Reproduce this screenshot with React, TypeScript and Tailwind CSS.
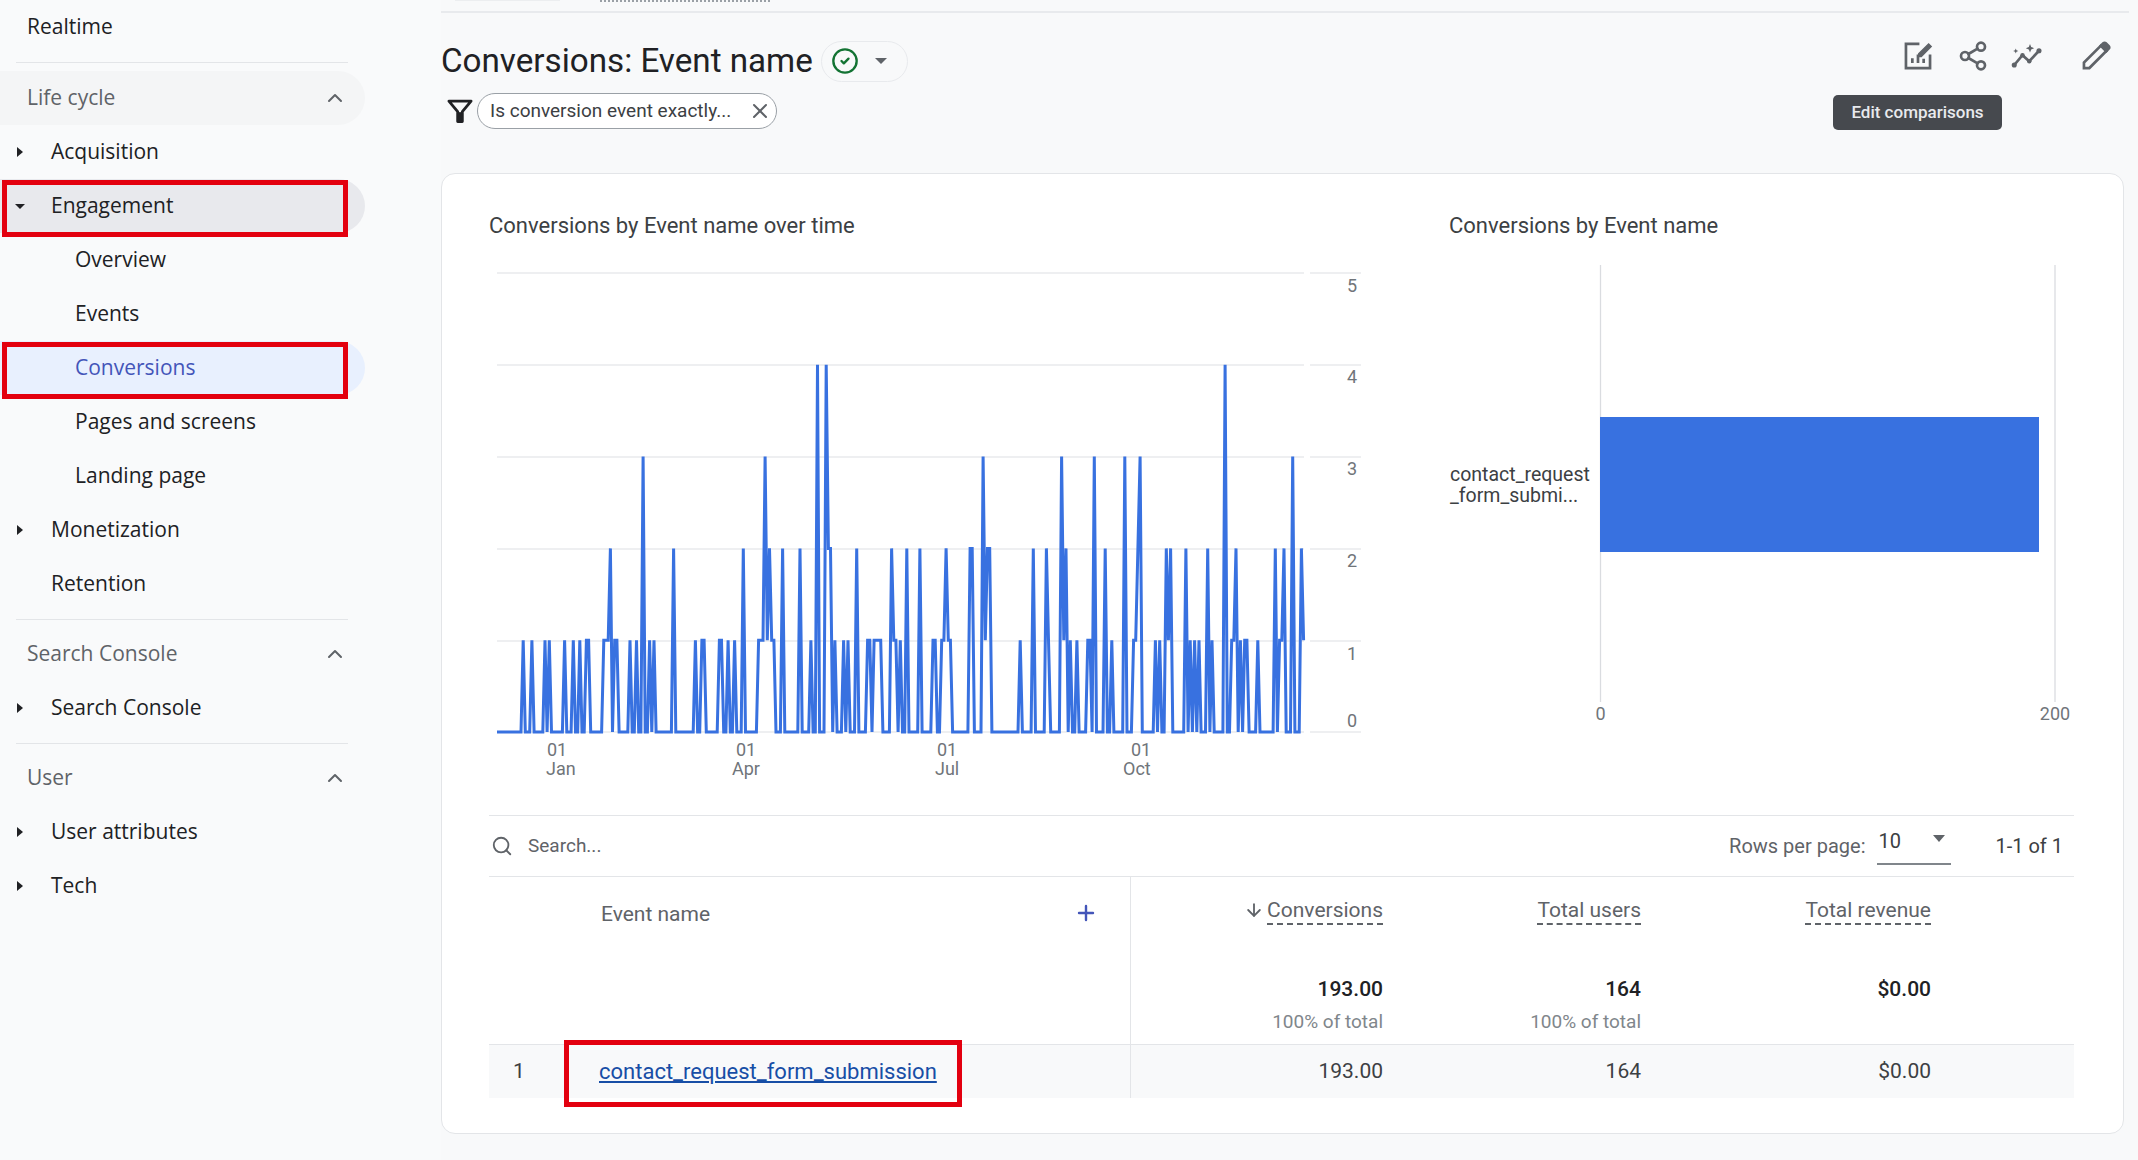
import { ArrowDown, ChevronUp, CircleCheck, Plus, Search, Share2, X } from 'lucide-react';

// peaks read off the line chart: [x position, conversions]
const PEAKS: [number, number][] = [
  [522.3, 1], [531.7, 1], [545, 1], [549.3, 1], [562.7, 1], [571.7, 1], [578, 1], [585, 1], [587.2, 1],
  [602.7, 1], [605, 1], [607, 1], [609.3, 2], [613.3, 1], [615.7, 1], [628.7, 1], [635.7, 1], [642.3, 3],
  [648.3, 1], [653.3, 1], [673, 2], [695, 1], [701.7, 1], [704, 1], [717.3, 1], [719.5, 1], [726.3, 1],
  [733, 1], [741.7, 2], [757.3, 1], [759.5, 1], [761.7, 1], [764, 3], [766.2, 1], [768.3, 2], [770.5, 1], [772.7, 1],
  [781.7, 2], [799.3, 2], [810.3, 1], [817, 4], [825.7, 4], [828, 2], [830, 2], [834.3, 1], [843.7, 1], [846, 1],
  [856.7, 2], [866, 1], [868.3, 1], [872.7, 1], [875, 1], [877.3, 1], [879.5, 1], [890, 2], [892.2, 1], [894.3, 1],
  [899, 1], [905.3, 2], [918.7, 2], [931.7, 1], [934, 1], [940.7, 1], [942.9, 1], [945.3, 2], [947.7, 1], [950, 1],
  [969.3, 2], [971.7, 2], [982.7, 3], [985, 1], [987, 2], [989.3, 2], [1020, 1], [1031.3, 2], [1044.7, 2],
  [1048.3, 1], [1060, 3], [1062.3, 1], [1064.7, 2], [1069, 1], [1075.7, 1], [1086.7, 1], [1090, 1], [1093.3, 3],
  [1104.3, 2], [1111, 1], [1124, 3], [1131.7, 1], [1134, 1], [1136, 2], [1140, 3], [1155, 1], [1159.3, 1],
  [1166, 2], [1168.3, 1], [1170.7, 2], [1184, 2], [1188.3, 1], [1192.7, 1], [1197.3, 1], [1206, 2], [1210.7, 1],
  [1224, 4], [1230, 1], [1232.7, 1], [1235, 2], [1239.3, 1], [1244, 1], [1246, 1], [1256.7, 1], [1274.7, 2],
  [1278.3, 1], [1281.7, 1], [1283.3, 2], [1292.3, 3], [1301.3, 2], [1303.3, 1],
];

const START_X = 496;
const STEP = 2.18;
const DAYS = 371;
const BASE_Y = 731;
const UNIT = 91.8;

function linePoints() {
  const values = new Array(DAYS).fill(0);
  PEAKS.forEach(([x, v]) => {
    values[Math.round((x - START_X) / STEP)] = v;
  });
  return values.map((v, i) => `${(START_X + i * STEP).toFixed(1)},${BASE_Y - v * UNIT}`).join(' ');
}

const Caret = ({ open }: { open?: boolean }) => (
  <svg width="12" height="12" viewBox="0 0 12 12" className="absolute left-[14px] top-[21px] text-[#202124]">
    {open ? <path d="M1 4h10L6 9z" fill="currentColor" /> : <path d="M3 1l6 5-6 5z" fill="currentColor" />}
  </svg>
);

function NavItem({ label, caret, open }: { label: string; caret?: boolean; open?: boolean }) {
  return (
    <div className="relative flex h-[54px] w-[365px] items-center pl-[51px] text-[#202124]">
      {caret && <Caret open={open} />}
      {label}
    </div>
  );
}

function SectionHead({ label, hover }: { label: string; hover?: boolean }) {
  return (
    <div className={`flex h-[54px] w-[365px] items-center justify-between rounded-r-full pl-[27px] pr-[18px] text-[#5f6368] ${hover ? 'bg-[#f4f5f6]' : ''}`}>
      {label}
      <ChevronUp size={24} strokeWidth={2} className="text-[#5f6368]" />
    </div>
  );
}

const RedBox = () => <div className="absolute left-[2px] top-[1px] h-[57px] w-[346px] border-[5px] border-[#e3000f]" />;

function Sidebar() {
  return (
    <aside className="w-[441px] shrink-0 bg-[#f9fafb] font-['Open_Sans',sans-serif] text-[21px]">
      <div className="flex h-[54px] items-center pl-[27px] text-[#202124]">Realtime</div>
      <div className="ml-[16px] mt-[8px] h-px w-[332px] bg-[#e3e5e8]" />
      <div className="mt-[8px]">
        <SectionHead label="Life cycle" hover />
        <NavItem label="Acquisition" caret />
        <div className="relative w-[365px] rounded-r-full bg-[#e8e9ed]">
          <NavItem label="Engagement" caret open />
          <RedBox />
        </div>
        <div className="flex h-[54px] items-center pl-[75px] text-[#202124]">Overview</div>
        <div className="flex h-[54px] items-center pl-[75px] text-[#202124]">Events</div>
        <div className="relative flex h-[54px] w-[365px] items-center rounded-r-full bg-[#e8f0fe] pl-[75px] text-[#4355b9]">
          Conversions
          <RedBox />
        </div>
        <div className="flex h-[54px] items-center pl-[75px] text-[#202124]">Pages and screens</div>
        <div className="flex h-[54px] items-center pl-[75px] text-[#202124]">Landing page</div>
        <NavItem label="Monetization" caret />
        <NavItem label="Retention" />
      </div>
      <div className="ml-[16px] mt-[8px] h-px w-[332px] bg-[#e3e5e8]" />
      <div className="mt-[7px]">
        <SectionHead label="Search Console" />
        <NavItem label="Search Console" caret />
      </div>
      <div className="ml-[16px] mt-[8px] h-px w-[332px] bg-[#e3e5e8]" />
      <div className="mt-[7px]">
        <SectionHead label="User" />
        <NavItem label="User attributes" caret />
        <NavItem label="Tech" caret />
      </div>
    </aside>
  );
}

function HeaderIcons() {
  return (
    <div className="flex items-center text-[#5f6368]">
      <svg width="34" height="34" viewBox="0 0 24 24" fill="none" stroke="currentColor" strokeWidth="1.9">
        <path d="M13 3.5H3.5v17h17V11" />
        <path d="M8 17v-3.5M12 17v-6M16 17v-3" />
        <path d="M12.5 10.5l7-7 1.8 1.8-7 7h-1.8z" fill="currentColor" strokeWidth="1" />
      </svg>
      <Share2 size={32} strokeWidth={2} className="ml-[22px]" />
      <svg width="36" height="36" viewBox="0 0 24 24" className="ml-[20px]" fill="currentColor">
        <path d="M3.5 18l5.5-6.5 4.5 4 6.5-7" fill="none" stroke="currentColor" strokeWidth="1.8" />
        <circle cx="3.5" cy="18" r="1.7" />
        <circle cx="9" cy="11.5" r="1.5" />
        <circle cx="13.5" cy="15.5" r="1.5" />
        <circle cx="20" cy="8.5" r="1.7" />
        <path d="M14 4l.8 2 2 .8-2 .8-.8 2-.8-2-2-.8 2-.8zM4.5 7l.5 1.2 1.2.5-1.2.5-.5 1.2-.5-1.2-1.2-.5 1.2-.5z" />
      </svg>
      <svg width="34" height="34" viewBox="0 0 24 24" className="ml-[34px] mr-[11px]" fill="none" stroke="currentColor" strokeWidth="1.9">
        <path d="M3.5 20.5v-3.8L15.5 4.7l3.8 3.8L7.3 20.5z" />
        <path d="M15.5 4.7l1.7-1.7a1.2 1.2 0 011.7 0l2.1 2.1a1.2 1.2 0 010 1.7l-1.7 1.7z" fill="currentColor" />
      </svg>
    </div>
  );
}

function LineChart() {
  const grid = [272, 364, 456, 548, 640, 731];
  const yLabels: [string, number][] = [['5', 285], ['4', 376], ['3', 468], ['2', 560], ['1', 653], ['0', 720]];
  const xLabels: [string, string, number, number][] = [
    ['01', 'Jan', 546, 545],
    ['01', 'Apr', 735, 731],
    ['01', 'Jul', 936, 934],
    ['01', 'Oct', 1130, 1122],
  ];
  return (
    <svg width="912" height="564" viewBox="488 250 912 564" className="block">
      {grid.map((y) => (
        <g key={y} stroke="#e8eaed" strokeWidth="1.3">
          <line x1="496" x2="1303" y1={y} y2={y} />
          <line x1="1309" x2="1360" y1={y} y2={y} />
        </g>
      ))}
      <polyline points={linePoints()} fill="none" stroke="#3871e0" strokeWidth="3" strokeLinejoin="miter" />
      {yLabels.map(([t, y]) => (
        <text key={t} x="1351" y={y + 6} textAnchor="middle" fontSize="18" fill="#70757a">{t}</text>
      ))}
      {xLabels.map(([d, m, dx, mx]) => (
        <g key={m} fontSize="18" fill="#70757a">
          <text x={dx} y="755">{d}</text>
          <text x={mx} y="774">{m}</text>
        </g>
      ))}
    </svg>
  );
}

function BarChart() {
  return (
    <svg width="625" height="564" viewBox="1448 250 625 564" className="block">
      <line x1="1599.5" x2="1599.5" y1="264" y2="701" stroke="#dadce0" strokeWidth="1.3" />
      <line x1="2054" x2="2054" y1="264" y2="701" stroke="#dadce0" strokeWidth="1.3" />
      <rect x="1599" y="416" width="439" height="135" fill="#3871e0" />
      <g fontSize="19.5" fill="#3c4043">
        <text x="1449" y="480">contact_request</text>
        <text x="1449" y="501">_form_submi...</text>
      </g>
      <g fontSize="18" fill="#70757a" textAnchor="middle">
        <text x="1599.5" y="719">0</text>
        <text x="2054" y="719">200</text>
      </g>
    </svg>
  );
}

function MetricHead({ label, arrow }: { label: string; arrow?: boolean }) {
  return (
    <div className="flex items-start justify-end gap-[3px] text-[#5f6368]">
      {arrow && <ArrowDown size={20} strokeWidth={2.2} className="mt-[3px] text-[#5f6368]" />}
      <span className="border-b-2 border-dashed border-[#5f6368] leading-[26px]">{label}</span>
    </div>
  );
}

function MetricColumn({ label, total, pct, arrow }: { label: string; total: string; pct?: string; arrow?: boolean }) {
  return (
    <div className="pt-[20px] text-right">
      <MetricHead label={label} arrow={arrow} />
      <div className="mt-[51px] font-medium leading-[26px] text-[#202124]">{total}</div>
      {pct && <div className="mt-[8px] text-[19px] leading-[24px] text-[#80868b]">{pct}</div>}
    </div>
  );
}

function DataTable() {
  return (
    <div className="text-[21px]">
      <div className="flex h-[62px] items-center justify-between border-y border-[#e3e5e8] text-[20px] text-[#5f6368]">
        <div className="flex items-center pl-[2px] text-[19px]">
          <Search size={22} strokeWidth={2} />
          <span className="ml-[15px]">Search...</span>
        </div>
        <div className="flex items-center pr-[11px]">
          <span>Rows per page:</span>
          <div className="relative ml-[12px] h-[38px] w-[74px] border-b-2 border-[#80868b]">
            <span className="absolute left-[1px] top-[-1px] text-[#3c4043]">10</span>
            <svg width="14" height="14" viewBox="0 0 14 14" className="absolute right-[5px] top-[5px]">
              <path d="M1 3h12L7 10z" fill="#5f6368" />
            </svg>
          </div>
          <span className="ml-[44px] text-[#3c4043]">1-1 of 1</span>
        </div>
      </div>
      <div className="grid grid-cols-[642px_252px_258px_290px_1fr]">
        <div className="flex h-[167px] items-start justify-between border-r border-[#e3e5e8] pl-[112px] pr-[32px] pt-[23px] text-[#5f6368]">
          <span className="leading-[28px]">Event name</span>
          <Plus size={24} strokeWidth={2.4} className="mt-[1px] text-[#4355b9]" />
        </div>
        <MetricColumn label="Conversions" total="193.00" pct="100% of total" arrow />
        <MetricColumn label="Total users" total="164" pct="100% of total" />
        <MetricColumn label="Total revenue" total="$0.00" />
        <div />
      </div>
      <div className="grid h-[54px] grid-cols-[642px_252px_258px_290px_1fr] items-center border-t border-[#e3e5e8] bg-[#f8f9fa] text-[#3c4043]">
        <div className="relative flex h-full items-center border-r border-[#e3e5e8]">
          <span className="w-[110px] pl-[24px]">1</span>
          <a className="text-[22px] text-[#174ea6] underline">contact_request_form_submission</a>
          <div className="absolute left-[75px] top-[-5px] h-[67px] w-[398px] border-[5px] border-[#e3000f]" />
        </div>
        <div className="text-right">193.00</div>
        <div className="text-right">164</div>
        <div className="text-right">$0.00</div>
        <div />
      </div>
    </div>
  );
}

export default function App() {
  return (
    <div className="flex h-[1160px] w-[2138px] overflow-hidden bg-[#f8f9fa] font-[Roboto,sans-serif]">
      <Sidebar />
      <main className="flex-1 pr-[15px]">
        <div className="-mr-[5px] flex h-[13px] items-start gap-[40px] border-b-2 border-[#e8eaed] pl-[14px]">
          <div className="h-px w-[105px] bg-[#eceef0]" />
          <div className="h-0 w-[170px] border-t-2 border-dotted border-[#9aa0a6]" />
        </div>
        <div className="relative flex items-start justify-between">
          <div>
            <div className="mt-[24px] flex h-[48px] items-center">
              <h1 className="text-[33.2px] font-normal text-[#202124]">Conversions: Event name</h1>
              <div className="ml-[8px] flex h-[41px] w-[87px] items-center rounded-full border border-[#e8eaed] pl-[9px]">
                <CircleCheck size={28} strokeWidth={2} className="text-[#137333]" />
                <svg width="14" height="14" viewBox="0 0 14 14" className="ml-[15px]">
                  <path d="M1 4h12L7 10z" fill="#5f6368" />
                </svg>
              </div>
            </div>
            <div className="mt-[8px] flex items-center pl-[5px]">
              <svg width="28" height="28" viewBox="0 0 24 24" fill="none" stroke="#202124">
                <path d="M2.5 3.5h19L14 12.5v8.5h-4v-8.5z" strokeWidth="2.4" strokeLinejoin="round" />
                <path d="M10.5 13h3v8h-3z" fill="#202124" strokeWidth="0" />
              </svg>
              <div className="ml-[3px] flex h-[36px] w-[300px] items-center justify-between rounded-full border border-[#9aa0a6] bg-white pl-[12px] pr-[4px] text-[19px] text-[#3c4043]">
                <span>Is conversion event exactly...</span>
                <X size={24} strokeWidth={2} className="text-[#5f6368]" />
              </div>
            </div>
          </div>
          <div className="mt-[25px]">
            <HeaderIcons />
          </div>
          <div className="absolute left-[1392px] top-[82px] flex h-[35px] w-[169px] items-center justify-center rounded-[5px] bg-[#46494e] text-[17px] font-medium text-[#e8eaed]">
            Edit comparisons
          </div>
        </div>
        <section className="mt-[44px] h-[961px] rounded-[14px] border border-[#e3e5e8] bg-white pl-[47px] pr-[49px] pt-[38px]">
          <div className="flex">
            <div className="w-[960px]">
              <h2 className="mb-[11px] text-[22px] font-normal leading-[28px] text-[#3c4043]">Conversions by Event name over time</h2>
              <LineChart />
            </div>
            <div className="flex-1">
              <h2 className="mb-[11px] text-[22px] font-normal leading-[28px] text-[#3c4043]">Conversions by Event name</h2>
              <BarChart />
            </div>
          </div>
          <DataTable />
        </section>
      </main>
    </div>
  );
}
